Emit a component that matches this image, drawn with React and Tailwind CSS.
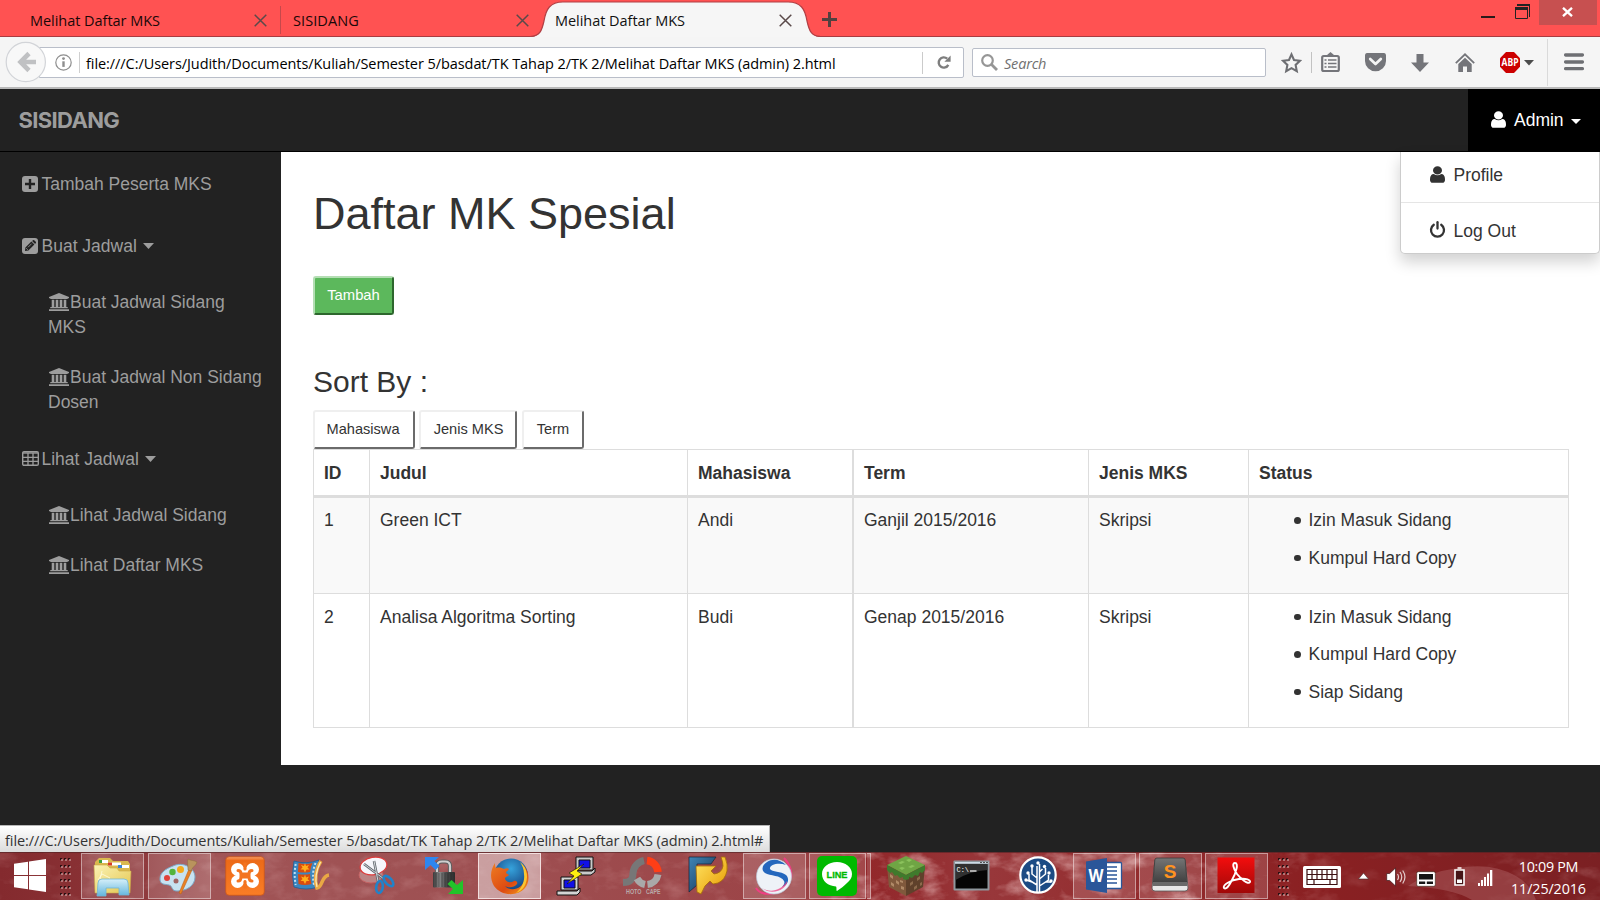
import React from "react";

const UI = "font-['Open_Sans','Noto_Sans',sans-serif]";

/* ---------- browser chrome ---------- */

function CloseX() {
  return (
    <svg className="h-[13px] w-[13px] shrink-0" viewBox="0 0 13 13">
      <path d="M.7.7l11.6 11.6M12.3.7L.7 12.3" stroke="#5a4a4a" strokeWidth="1.5" fill="none" />
    </svg>
  );
}

function TitleBar() {
  return (
    <div className={`relative flex h-[37px] items-start bg-[#ff5252] text-[14.500px] text-[#1a0808] ${UI}`}>
      <div className="absolute inset-x-0 bottom-0 h-px bg-[#a93c41]" />
      <div className="flex h-[37px] w-[280px] items-center pl-[30px] pt-[3px]">
        <span className="w-[224px] whitespace-nowrap tracking-[-0.04px]">Melihat Daftar MKS</span>
        <CloseX />
      </div>
      <div className="mt-[6px] h-[28px] w-px bg-[#c5484b]" />
      <div className="flex h-[37px] w-[249px] items-center pl-[12px] pt-[3px]">
        <span className="w-[223px] whitespace-nowrap tracking-[0.08px]">SISIDANG</span>
        <CloseX />
      </div>
      <div className="relative h-[37px] w-[290px]">
        <svg className="absolute inset-0 h-[37px] w-[290px]" viewBox="0 0 290 37">
          <path d="M0 37 C10 37 12 30 14 21 C16 9 20 2 33 2 H258 C271 2 275 9 277 21 C279 30 281 37 291 37 Z" fill="#f6f6f6" />
          <path d="M0 36.5 C10 36.5 12 30 14 21 C16 9 20 2 33 2 H258 C271 2 275 9 277 21 C279 30 281 36.5 291 36.5" fill="none" stroke="#b23f44" strokeWidth="1.2" />
        </svg>
        <div className="relative flex h-full items-center pl-[25px] pt-[3px] text-[#111]">
          <span className="w-[224px] whitespace-nowrap tracking-[-0.04px]">Melihat Daftar MKS</span>
          <CloseX />
        </div>
      </div>
      <svg className="ml-[2px] mt-[12px] h-[15px] w-[15px]" viewBox="0 0 15 15">
        <path d="M7.5 0v15M0 7.5h15" stroke="#54403f" strokeWidth="3" />
      </svg>
      <div className="flex-1" />
      <svg className="mr-[20px] mt-[16px] h-[2px] w-[14px]" viewBox="0 0 14 2">
        <path d="M0 1h14" stroke="#2a1a1a" strokeWidth="2" />
      </svg>
      <svg className="mr-[9px] mt-[4px] h-[15px] w-[15px]" viewBox="0 0 15 15">
        <path d="M2 .5H14.5V13" stroke="#222" fill="none" />
        <path d="M2 1h13" stroke="#222" strokeWidth="2" />
        <path d="M.5 3.5h12v11H.5z" stroke="#222" fill="none" />
        <path d="M0 4.500h13" stroke="#222" strokeWidth="3" />
      </svg>
      <div className="mr-[3px] flex h-[25px] w-[58px] items-center justify-center bg-[#c75050]">
        <svg className="mr-[2px] mt-[-2px] h-[10px] w-[11px]" viewBox="0 0 11 10">
          <path d="M1 .8l9 8.400M10 .8L1 9.200" stroke="#fff" strokeWidth="2.300" />
        </svg>
      </div>
    </div>
  );
}

function Toolbar() {
  return (
    <div className={`relative flex h-[52px] items-start border-b-2 border-[#b9b9b9] bg-[#f5f5f5] text-[14.500px] text-black ${UI}`}>
      <div className="ml-[39px] mt-[10px] flex h-[31px] w-[925px] items-center rounded-r-[2px] border border-[#b9bec9] bg-white">
        <svg className="ml-[15px] h-[17px] w-[17px]" viewBox="0 0 17 17">
          <circle cx="8.5" cy="8.5" r="7.7" fill="none" stroke="#8e8e8e" strokeWidth="1.2" />
          <path d="M8.5 7.3v5.6" stroke="#8e8e8e" strokeWidth="2.4" />
          <circle cx="8.5" cy="4.6" r="1.4" fill="#8e8e8e" />
        </svg>
        <div className="ml-[7px] h-[21px] w-px bg-[#cfcfcf]" />
        <span className="ml-[6px] mt-[2px] flex-1 whitespace-nowrap tracking-[-0.065px]">
          file:///C:/Users/Judith/Documents/Kuliah/Semester 5/basdat/TK Tahap 2/TK 2/Melihat Daftar MKS (admin) 2.html
        </span>
        <div className="h-[22px] w-px bg-[#cbcbcb]" />
        <svg className="ml-[14px] mr-[12px] h-[15px] w-[14px]" viewBox="0 0 14 15">
          <path d="M11.3 9.9A5.1 5.1 0 1 1 10.2 3.7" fill="none" stroke="#7e7e7e" strokeWidth="2.4" />
          <path d="M13.6.4v6.4H7.4z" fill="#7e7e7e" />
        </svg>
      </div>
      <svg className="absolute left-[5px] top-[4px] h-[42px] w-[42px]" viewBox="0 0 42 42">
        <circle cx="20.8" cy="21" r="19.6" fill="#f8f8f8" stroke="#d2d4d8" strokeWidth="1.2" />
        <path d="M24 12.5L15.5 21l8.500 8.500M15 21H31" fill="none" stroke="#c0c1c3" strokeWidth="4.600" />
      </svg>
      <div className="ml-[8px] mt-[11px] flex h-[29px] w-[294px] items-center rounded-[2px] border border-[#b9bec9] bg-white">
        <svg className="ml-[8px] h-[17px] w-[17px]" viewBox="0 0 17 17">
          <circle cx="6.500" cy="6.500" r="5.300" fill="none" stroke="#969696" strokeWidth="2.200" />
          <path d="M10.300 10.300l5.700 5.700" stroke="#969696" strokeWidth="2.800" />
        </svg>
        <span className="ml-[6px] mt-[2px] italic tracking-[-0.2px] text-[#707070]">Search</span>
      </div>
      <svg className="ml-[15px] mt-[15px] h-[22px] w-[21px]" viewBox="0 0 21 22">
        <path d="M10.500 2.400l2.500 5.600 6 .7-4.400 4.200 1.200 6.200-5.300-3-5.300 3 1.200-6.200L2 8.700l6-.7z" fill="none" stroke="#6e6f73" strokeWidth="2.100" />
      </svg>
      <div className="ml-[9px] mt-[15px] h-[21px] w-px bg-[#c2c2c2]" />
      <svg className="ml-[9px] mt-[14px] h-[22px] w-[19px]" viewBox="0 0 19 22">
        <path d="M5.500 4.500L9.500 1l4 3.500z" fill="#74757a" />
        <rect x="1.200" y="5" width="16.600" height="15" rx="1.500" fill="none" stroke="#74757a" strokeWidth="2.200" />
        <path d="M3.500 9h2M7 9h8.500M3.500 12.500h2M7 12.500h8.500M3.500 16h2M7 16h8.500" stroke="#74757a" strokeWidth="1.700" />
      </svg>
      <svg className="ml-[25px] mt-[16px] h-[19px] w-[21px]" viewBox="0 0 21 19">
        <path d="M2.500 0h16A2.300 2.300 0 0 1 21 2.300V8a10.500 10.300 0 0 1-21 0V2.300A2.300 2.300 0 0 1 2.500 0z" fill="#74757a" />
        <path d="M5.200 6l5.300 5 5.300-5" fill="none" stroke="#f5f5f5" strokeWidth="2.700" strokeLinecap="round" strokeLinejoin="round" />
      </svg>
      <svg className="ml-[25px] mt-[17px] h-[18px] w-[18px]" viewBox="0 0 18 18">
        <path d="M5.500 0h7v8.500H18L9 18 0 8.500h5.500z" fill="#74757a" />
      </svg>
      <svg className="ml-[26px] mt-[16px] h-[19px] w-[20px]" viewBox="0 0 20 19">
        <path d="M.8 10.200L10 1.300l9.200 8.900" fill="none" stroke="#74757a" strokeWidth="1.800" />
        <path d="M3.300 11L10 4.700 16.700 11v8H12v-5.500H8V19H3.300z" fill="#74757a" />
      </svg>
      <svg className="ml-[25px] mt-[15px] h-[21px] w-[20px] overflow-visible" viewBox="0 0 20 21">
        <path d="M6 0h8l6 6.200v8.600L14 21H6L0 14.800V6.200z" fill="#c00" />
        <text x="10" y="14" textAnchor="middle" textLength="17" lengthAdjust="spacingAndGlyphs" fontSize="10" fontWeight="700" fontFamily="Open Sans, sans-serif" fill="#fff">ABP</text>
      </svg>
      <svg className="ml-[4px] mt-[23px] h-[6px] w-[10px]" viewBox="0 0 10 6"><path d="M0 0h10L5 5.500z" fill="#4c4c4c" /></svg>
      <div className="ml-[13px] mt-[2px] h-[47px] w-px bg-[#dadada]" />
      <svg className="ml-[16px] mt-[16px] h-[18px] w-[20px]" viewBox="0 0 20 18">
        <path d="M1.600 2h16.800M1.600 9h16.800M1.600 15.700h16.800" stroke="#6e6f73" strokeWidth="3.300" strokeLinecap="round" />
      </svg>
    </div>
  );
}

/* ---------- page icons ---------- */

function UserIcon({ className }) {
  return (
    <svg className={className} viewBox="0 100 1280 1580" preserveAspectRatio="none" fill="currentColor">
      <path d="M1280 1399q0 109-62.500 187t-150.500 78h-854q-88 0-150.500-78t-62.500-187q0-85 8.500-160.500t31.500-152 58.500-131 94-89 134.500-34.500q131 128 313 128t313-128q76 0 134.500 34.500t94 89 58.500 131 31.500 152 8.500 160.500zm-256-887q0 159-112.500 271.500t-271.500 112.500-271.500-112.500-112.500-271.500 112.500-271.500 271.500-112.500 271.500 112.500 112.500 271.500z" />
    </svg>
  );
}

function PowerIcon({ className }) {
  return (
    <svg className={className} viewBox="0 0 16 17">
      <path d="M4.300 3.800a6.500 6.500 0 1 0 7.400 0" fill="none" stroke="currentColor" strokeWidth="2.300" strokeLinecap="round" />
      <path d="M8 1.200v6.300" stroke="currentColor" strokeWidth="2.300" strokeLinecap="round" />
    </svg>
  );
}

function PlusSquare() {
  return (
    <svg className="mr-[3.500px] h-[16px] w-[16px]" viewBox="0 0 16 16">
      <rect width="16" height="16" rx="3" fill="currentColor" />
      <path d="M8 3v10M3 8h10" stroke="#222" strokeWidth="2.400" />
    </svg>
  );
}

function PencilSquare() {
  return (
    <svg className="mr-[3.500px] h-[16px] w-[16px]" viewBox="0 0 16 16">
      <rect width="16" height="16" rx="3" fill="currentColor" />
      <path d="M3 13l.4-3.400 6-6 3 3-6 6zM10.100 2.900l.8-.7a1 1 0 0 1 1.300 0l1.600 1.600a1 1 0 0 1 0 1.300l-.7.8z" fill="#222" />
      <path d="M4.200 10.200l1.600 1.600M6 9.300l3.600-3.600" stroke="#9d9d9d" strokeWidth=".8" />
    </svg>
  );
}

function TableIcon() {
  return (
    <svg className="mb-[2px] mr-[2.500px] h-[15px] w-[17px]" viewBox="0 0 17 15">
      <rect x=".7" y=".7" width="15.600" height="13.600" rx="1.300" fill="none" stroke="currentColor" strokeWidth="1.400" />
      <path d="M1 2h15" stroke="currentColor" strokeWidth="1.400" />
      <path d="M1 6.400h15M1 10.300h15M6 2v12M11 2v12" stroke="currentColor" strokeWidth="1.300" />
    </svg>
  );
}

function BankIcon() {
  return (
    <svg className="mb-[-1px] ml-[0.500px] mr-[1.500px] inline-block h-[18px] w-[20px] align-[-2px]" viewBox="0 0 20 18" fill="currentColor">
      <path d="M10 0l10 4v1.300h-1.300v.7H1.300v-.7H0V4z" />
      <path d="M2.700 6.700h2.600v7.300h1.400V6.700h2.600v7.300h1.400V6.700h2.600v7.300h1.400V6.700h2.600v7.300h1.400v1.300H1.300V14h1.400zM0 16.300h20V18H0z" />
    </svg>
  );
}

function Caret({ className }) {
  return (
    <svg className={className} viewBox="0 0 10 5" preserveAspectRatio="none">
      <path d="M0 0h10L5 5z" fill="currentColor" />
    </svg>
  );
}

/* ---------- page ---------- */

function NavBar() {
  return (
    <header className="relative flex h-[63px] justify-between border-b border-black bg-[#222]">
      <span className="ml-[18.500px] mt-[15px] font-['Inter',sans-serif] text-[22px] font-bold leading-[32px] tracking-[-0.650px] text-[#9d9d9d]">SISIDANG</span>
      <div className="flex h-[63px] w-[132px] bg-black text-white">
        <UserIcon className="ml-[23px] mt-[22px] h-[17px] w-[15px]" />
        <span className="ml-[8px] mt-[19px] w-[57px]">Admin</span>
        <Caret className="mt-[30px] h-[5px] w-[10px]" />
      </div>
      <div className="absolute right-0 top-[63px] z-10 h-[102px] w-[200px] rounded-b-[5px] border border-t-0 border-[#ccc] bg-white text-[#333] shadow-[0_8px_15px_rgba(0,0,0,0.18)]">
        <div className="flex h-[51px] border-b border-[#e5e5e5] pl-[29px] pt-[11px]">
          <UserIcon className="mt-[3px] h-[17px] w-[15px]" />
          <span className="ml-[8.500px]">Profile</span>
        </div>
        <div className="flex pl-[28px] pt-[16px]">
          <PowerIcon className="mt-[2px] h-[17px] w-[17px]" />
          <span className="ml-[7.500px]">Log Out</span>
        </div>
      </div>
    </header>
  );
}

function SideBar() {
  return (
    <aside className="w-[281px] shrink-0 pt-[19.500px] text-[#9d9d9d]">
      <div className="flex items-center pl-[22px]"><PlusSquare />Tambah Peserta MKS</div>
      <div className="mt-[37px] flex items-center pl-[22px]">
        <PencilSquare />Buat Jadwal<Caret className="ml-[6px] h-[6px] w-[11px]" />
      </div>
      <div className="ml-[48px] mt-[31px] w-[220px]"><BankIcon />Buat Jadwal Sidang<br />MKS</div>
      <div className="ml-[48px] mt-[25px] w-[225px] whitespace-nowrap"><BankIcon />Buat Jadwal Non Sidang<br />Dosen</div>
      <div className="mt-[32px] flex items-center pl-[22px]">
        <TableIcon />Lihat Jadwal<Caret className="ml-[6px] h-[6px] w-[11px]" />
      </div>
      <div className="ml-[48px] mt-[31px]"><BankIcon />Lihat Jadwal Sidang</div>
      <div className="ml-[48px] mt-[25px]"><BankIcon />Lihat Daftar MKS</div>
    </aside>
  );
}

function SortButton({ children, width }) {
  return (
    <button className={`h-[39px] rounded-[3px] border-2 border-b-[#6b6b6b] border-l-[#efefef] border-r-[#6b6b6b] border-t-[#efefef] bg-white text-[14.600px] text-[#333] ${width}`}>
      {children}
    </button>
  );
}

const rows = [
  { id: 1, judul: "Green ICT", mhs: "Andi", term: "Ganjil 2015/2016", jenis: "Skripsi", status: ["Izin Masuk Sidang", "Kumpul Hard Copy"], cls: "h-[96px] bg-[#f9f9f9]", pad: "pt-[10px]" },
  { id: 2, judul: "Analisa Algoritma Sorting", mhs: "Budi", term: "Genap 2015/2016", jenis: "Skripsi", status: ["Izin Masuk Sidang", "Kumpul Hard Copy", "Siap Sidang"], cls: "h-[134px]", pad: "pt-[10.700px]" },
];

const td = "border-b border-r border-[#ddd] px-[10px] align-top";
const th = "border-b-[3px] border-r border-t border-[#ddd] px-[10px] pt-[2px] text-left align-middle font-bold";

function Content() {
  return (
    <main className="h-[613px] flex-1 bg-white pl-[32px] pt-[37px] text-[#333]">
      <h1 className="h-[49px] text-[45px] leading-[49px]">Daftar MK Spesial</h1>
      <button className="mt-[38px] block h-[39px] w-[81px] rounded-[3px] border-2 border-b-[#2d672d] border-l-[#b4deb4] border-r-[#2d672d] border-t-[#b4deb4] bg-[#5cb85c] pb-[1px] text-[14.800px] text-white">Tambah</button>
      <h3 className="mt-[50px] h-[33px] text-[30px] leading-[33px]">Sort By :</h3>
      <div className="mt-[12px] flex">
        <SortButton width="w-[102px] pr-[2px]">Mahasiswa</SortButton>
        <SortButton width="w-[98px] ml-[4px] pl-[1px]">Jenis MKS</SortButton>
        <SortButton width="w-[62px] ml-[5px]">Term</SortButton>
      </div>
      <table className="w-[1256px] table-fixed border-separate border-spacing-0">
        <colgroup>
          <col className="w-[57px]" /><col className="w-[318px]" /><col className="w-[166px]" />
          <col className="w-[235px]" /><col className="w-[160px]" /><col className="w-[320px]" />
        </colgroup>
        <thead>
          <tr className="h-[49px]">
            <th className={`${th} border-l`}>ID</th>
            <th className={th}>Judul</th>
            <th className={`${th} border-r-2`}>Mahasiswa</th>
            <th className={th}>Term</th>
            <th className={th}>Jenis MKS</th>
            <th className={th}>Status</th>
          </tr>
        </thead>
        <tbody>
          {rows.map((r) => (
            <tr key={r.id} className={r.cls}>
              <td className={`${td} ${r.pad} border-l`}>{r.id}</td>
              <td className={`${td} ${r.pad}`}>{r.judul}</td>
              <td className={`${td} ${r.pad} border-r-2`}>{r.mhs}</td>
              <td className={`${td} ${r.pad}`}>{r.term}</td>
              <td className={`${td} ${r.pad}`}>{r.jenis}</td>
              <td className={`${td} ${r.pad}`}>
                <ul className="flex flex-col gap-[12.500px] pl-[35px]">
                  {r.status.map((s) => (
                    <li key={s} className="flex items-center gap-[8px]">
                      <i className="h-[6.500px] w-[6.500px] rounded-full bg-[#333]" />
                      {s}
                    </li>
                  ))}
                </ul>
              </td>
            </tr>
          ))}
        </tbody>
      </table>
    </main>
  );
}

/* ---------- taskbar icons ---------- */

const icon = "h-[40px] w-[40px] shrink-0 overflow-visible";

const FolderIcon = () => (
  <svg className={icon} viewBox="0 0 40 40">
    <defs>
      <linearGradient id="fo" x1="0" y1="0" x2="1" y2="1"><stop offset="0" stopColor="#fbf3b4" /><stop offset="1" stopColor="#e3c54f" /></linearGradient>
      <linearGradient id="fb" x1="0" y1="0" x2="0" y2="1"><stop offset="0" stopColor="#d6f0fa" /><stop offset="1" stopColor="#62b5dc" /></linearGradient>
    </defs>
    <path d="M4 3l2-2h11l3 3h15l2 3v28H2V5z" fill="#d9b84e" />
    <path d="M6 3h9v3H6zM15 5.500h13v3H15zM25 8h11v3H25z" fill="#fff" />
    <path d="M6 3h3v3H6z" fill="#3ca03c" /><path d="M15 5.500h4v3h-4z" fill="#d83a25" /><path d="M25 8h4v3h-4z" fill="#3a86d8" />
    <path d="M1 8h13l3 3h7l2 3h12l-1 22H2z" fill="url(#fo)" stroke="#caa947" strokeWidth=".6" />
    <path d="M5 26q0-4 4-4h22q4 0 4 4l1 12H26v-7H13v8H4z" fill="url(#fb)" stroke="#70b6d6" strokeWidth=".8" />
    <path d="M9 14l-2 8M9 17l8 4M9 17l-4 6" stroke="#fffbe0" strokeWidth=".8" />
  </svg>
);

const PaintIcon = () => (
  <svg className={icon} viewBox="0 0 40 40">
    <path d="M14 9C24 4 36 11 36 20s-9 14-18 14c-6 0-4-5-8-6S1 28 1 22 6 12 14 9z" fill="#c7e2f1" stroke="#7ca9c6" strokeWidth="1" />
    <circle cx="8" cy="21" r="3" fill="#e0413a" /><circle cx="13.500" cy="15" r="3.200" fill="#52b43c" /><circle cx="21.500" cy="12.500" r="3.500" fill="#f6a91c" />
    <circle cx="17" cy="24" r="2.500" fill="#a16463" />
    <path d="M30 12l3 1-11 24-2-1z" fill="#e88125" stroke="#b75c15" strokeWidth=".5" />
    <path d="M29 13c0-5-1-8 0-11 3 2 6 1 9 3-1 4-4 4-6 9z" fill="#b9935d" stroke="#8d6b3c" strokeWidth=".5" />
  </svg>
);

const XamppIcon = () => (
  <svg className={icon} viewBox="0 0 40 40">
    <defs><linearGradient id="xa" x1="0" y1="0" x2="0" y2="1"><stop offset="0" stopColor="#f8a06a" /><stop offset=".1" stopColor="#ec6a18" /><stop offset="1" stopColor="#fb7d25" /></linearGradient></defs>
    <rect x=".7" y=".7" width="38.600" height="38.600" rx="3.500" fill="url(#xa)" stroke="#c9561a" strokeWidth=".8" />
    <g fill="#fff">
      <circle cx="12.500" cy="13.500" r="6.500" /><circle cx="27.500" cy="13.500" r="6.500" />
      <circle cx="12.500" cy="25.500" r="6.500" /><circle cx="27.500" cy="25.500" r="6.500" />
      <path d="M11 11h18v17H11z" />
    </g>
    <path d="M19 7h2v6a1 1 0 0 1-2 0zM19 25.500a1 1 0 0 1 2 0V32h-2z" fill="#f37421" stroke="#f37421" strokeWidth="1.200" />
    <path d="M5 19.500l4-.8v1.600zM35 19.500l-4-.8v1.600z" fill="#f37421" />
    <path d="M13 14.500q3 0 3 3.500h8q0-3.500 3-3.500M13 25q3 0 3-4h8q0 4 3 4" fill="none" stroke="#f37421" strokeWidth="3" strokeLinecap="round" />
  </svg>
);

const MovieIcon = () => (
  <svg className={icon} viewBox="0 0 40 40">
    <path d="M3 5q12 4 25-1-5 13-1 27-12 4-24 0-3-12 0-26z" fill="#3b86c0" stroke="#1f6098" strokeWidth=".8" />
    <path d="M7.500 7q7 2 14 0-2 4-2.500 9-6 1-12 0zM7 18q6 1 12 0 0 5 1.500 10-7 2-13 0z" fill="#d94c10" />
    <path d="M14 7l1 3 3-1-1.500 2.500 2 2-3 0-1.500 3-1.500-3-3 0 2-2L10 9l3 1zM14 18.500l1 3 3-1-1.500 2.500 2 2-3 0-1.500 3-1.500-3-3 0 2-2-1.500-2.500 3 1z" fill="#ffae1c" />
    <path d="M4.700 8q-2 10 0 21" fill="none" stroke="#bfe0f3" strokeWidth="2" strokeDasharray="2 2" /><path d="M24.500 7q-4 10-1.500 22" fill="none" stroke="#bfe0f3" strokeWidth="2" strokeDasharray="2 2" />
    <path d="M30 5c-5 7-7 18-4 27 6-1 4-12 12-13" fill="none" stroke="#e9a844" strokeWidth="3.600" /><path d="M29.500 6c-4 8-6 17-3.500 25" fill="none" stroke="#fde7b2" strokeWidth="1.300" />
  </svg>
);

const SnipIcon = () => (
  <svg className={icon} viewBox="0 0 40 40">
    <ellipse cx="14" cy="19" rx="12" ry="8" fill="#c99a9a" stroke="#d46a6a" opacity=".7" />
    <ellipse cx="16.500" cy="10" rx="13.500" ry="8.700" transform="rotate(-10 16.500 10)" fill="#f6f6fb" stroke="#dd3b3b" strokeWidth="1.200" />
    <path d="M7 8l20 15M17 5l4 20" stroke="#62676e" strokeWidth="2.600" /><path d="M7 8l20 15M17 5l4 20" stroke="#d0d4d8" strokeWidth="1" />
    <ellipse cx="22.500" cy="31" rx="3.300" ry="6" transform="rotate(8 22.500 31)" fill="none" stroke="#2182c9" strokeWidth="2.600" /><ellipse cx="31.500" cy="25" rx="3.200" ry="6.300" transform="rotate(-42 31.500 25)" fill="none" stroke="#2182c9" strokeWidth="2.600" />
  </svg>
);

const LockIcon = () => (
  <svg className={icon} viewBox="0 0 40 40">
    <defs><linearGradient id="lk" x1="0" x2="1"><stop offset="0" stopColor="#3a3a3a" /><stop offset=".3" stopColor="#8a8a8a" /><stop offset=".6" stopColor="#4a4a4a" /><stop offset="1" stopColor="#2c2c2c" /></linearGradient></defs>
    <path d="M13 17v-7q0-4.500 5-4.500h3q5 0 5 4.500v7" fill="none" stroke="#5c5c5c" strokeWidth="4.200" /><path d="M13 17v-7q0-4.500 5-4.500h3q5 0 5 4.500v7" fill="none" stroke="#cfcfcf" strokeWidth="2.200" />
    <rect x="9" y="16" width="22" height="15.500" rx="1" fill="url(#lk)" />
    <path d="M12 17v14M15 17v14M18 17v14M21 17v14M24 17v14M27 17v14" stroke="#222" strokeWidth=".8" opacity=".6" />
    <path d="M1 1h14l-4.500 4 5 5-4 4-5-5L1 14z" fill="#2e86f0" />
    <path d="M39 38H24l5-5-5.500-5 4-4 5.500 5 6-5z" fill="#22c32a" />
  </svg>
);

const FirefoxIcon = () => (
  <svg className={icon} viewBox="0 0 40 40">
    <defs>
      <radialGradient id="fg" cx=".5" cy=".3" r=".7"><stop offset="0" stopColor="#36a3dc" /><stop offset="1" stopColor="#123a78" /></radialGradient>
      <linearGradient id="ff" x1="0" y1="0" x2="1" y2="1"><stop offset="0" stopColor="#ee7d22" /><stop offset=".6" stopColor="#dd4a12" /><stop offset="1" stopColor="#f7a21b" /></linearGradient>
    </defs>
    <circle cx="21" cy="18.500" r="17" fill="url(#fg)" />
    <path d="M5 6c0 2 0 4 1 5 3-1 6 0 8 1 2-1 4-1 5 0-1 2-3 2-3 4l3 2c-1 2-4 1-4 4 2 4 6 4 9 2 2-1 4 1 3 3-3 4-9 4-12 2 5 6 18 4 20-8 1-5 0-9-2-13 8 8 6 18 2 23-8 9-24 8-31-2C-1 20 1 12 5 6z" fill="url(#ff)" />
    <path d="M30 5c8 6 9 17 4 25-2 3-5 5-8 6 6-5 9-12 8-19 0-5-2-9-4-12z" fill="#f9c631" />
  </svg>
);

const PuttyIcon = () => (
  <svg className={icon} viewBox="0 0 40 40" stroke="#111" strokeWidth="1">
    <path d="M20 1h17v13H20zM17 15h19l3-3v4l-4 3H17z" fill="#c9c9c9" /><path d="M23 4h11v8H23z" fill="#1010e8" />
    <path d="M5 21h17v13H5zM1 35h20l3-3v4l-3 3H1z" fill="#d4d4d4" /><path d="M8 24h11v8H8z" fill="#1010e8" />
    <path d="M28 8L13 17l5 3-7 8 15-10-5-3z" fill="#ffee10" strokeWidth=".6" />
  </svg>
);

const PhotoScapeIcon = () => (
  <svg className={icon} viewBox="0 0 40 40">
    <path d="M22 4.500a14 14 0 0 0-11 12.500c0 7-3 9.500-10 9.500" fill="none" stroke="#777" strokeWidth="7" />
    <path d="M25 4.500a12.500 12.500 0 0 1 11 11.500" fill="none" stroke="#ff3e16" strokeWidth="7.500" />
    <path d="M36 18.500a12 12 0 0 1-10.500 10M23 28.500a12 12 0 0 1-8-6" fill="none" stroke="#a9a9a9" strokeWidth="7" />
    <text x="4" y="38" textLength="15.500" lengthAdjust="spacingAndGlyphs" fontSize="7.500" fontWeight="700" fontFamily="Liberation Sans, sans-serif" fill="#b9a9a9">HOTO</text>
    <text x="24" y="38" textLength="14.500" lengthAdjust="spacingAndGlyphs" fontSize="7.500" fontWeight="700" fontFamily="Liberation Sans, sans-serif" fill="#b9a9a9">CAPE</text>
  </svg>
);

const ArrowsIcon = () => (
  <svg className={icon} viewBox="0 0 40 40">
    <defs>
      <linearGradient id="ay" x1="0" y1="0" x2="1" y2="1"><stop offset="0" stopColor="#ffe564" /><stop offset="1" stopColor="#e79a00" /></linearGradient>
      <linearGradient id="ab" x1="0" y1="0" x2="1" y2="1"><stop offset="0" stopColor="#3f86b8" /><stop offset="1" stopColor="#17304d" /></linearGradient>
    </defs>
    <path d="M1 1h27l-5 7H9v21l-8 7z" fill="url(#ab)" stroke="#122438" strokeWidth=".7" />
    <path d="M8 10h20l-5 5 3 3q8-1 9-8 0-4-2-9h4q3 7 2 14-2 9-9 12l-5 1-3-3-5 5-4 8-4-2z" fill="url(#ay)" stroke="#a46c07" strokeWidth=".8" strokeLinejoin="round" />
  </svg>
);

const SwirlIcon = () => (
  <svg className={icon} viewBox="0 0 40 40">
    <path d="M30 1c7 7 8 16 7 20M2 31c5 8 22 9 33-5" fill="none" stroke="#ef3f83" strokeWidth="2" />
    <circle cx="20" cy="19.500" r="17.500" fill="#eef2f7" stroke="#bccbdc" strokeWidth=".7" />
    <path d="M32 8c-5-5-13-7-19-3-5 3-6 8-2 11 5 3 16 2 19 8 1 2 0 4-2 6 6-2 8-8 4-12-5-4-14-3-16-6-1-4 8-7 16-4z" fill="#2467bd" />
    <path d="M8 31c8 5 19 3 25-7 1 7-14 16-25 7z" fill="#ee4281" opacity=".75" />
  </svg>
);

const LineIcon = () => (
  <svg className={icon} viewBox="0 0 40 40">
    <rect width="40" height="40" rx="5" fill="#00b900" />
    <path d="M20 6c8.500 0 15 5.300 15 12 0 4-2 6-5 9-3 3-7 6-10 8-1 0 0-3-1-4.500C11 30 5 25 5 18 5 11.300 11.500 6 20 6z" fill="#fff" />
    <text x="20" y="22" textAnchor="middle" textLength="21" lengthAdjust="spacingAndGlyphs" fontSize="9.500" fontWeight="700" fontFamily="Liberation Sans, sans-serif" fill="#00b900" stroke="#00b900" strokeWidth=".3">LINE</text>
  </svg>
);

const BlockIcon = () => (
  <svg className={icon} viewBox="0 0 40 40">
    <path d="M1 10l19 9v21L3 31z" fill="#80593c" /><path d="M39 10l-19 9v21l17-9z" fill="#5f412b" />
    <path d="M20 0l19 9-19 10L1 9z" fill="#6fa544" />
    <path d="M1 9l19 10v5l-3-1v-2l-3 1-3-3-2 1-3-4-2 1-3-3zM39 9L20 19v5l3-1v-2l3 1 3-3 3 1 2-4 2 1 3-3z" fill="#3f7a2c" />
    <path d="M4 18l3 2v3l-3-2zM10 24l3 2v3l-3-2zM15 30l3 1v3l-3-1zM5 26l3 2v3l-3-2zM14 24l3 1v2l-3-1z" fill="#b08a67" />
    <path d="M24 27l3-2v3l-3 2zM31 22l3-2v3l-3 2zM28 31l3-2v3l-3 2zM34 27l2-1v3l-2 1z" fill="#8c6a4c" />
    <path d="M12 7l4-2 3 1-4 2zM22 11l4-2 3 1-4 2zM20 4l3-1 3 1-3 2zM13 12l3-1 3 1-3 2z" fill="#8bc25c" />
  </svg>
);

const CmdIcon = () => (
  <svg className={icon} viewBox="0 0 40 40">
    <rect x="1.500" y="4.500" width="36" height="30" rx="1" fill="#8f979d" />
    <path d="M3 6h33.500v1.500H3z" fill="#ccdbe6" /><path d="M28 6h2v1h-2zM31 6h2v1h-2zM34 6h2v1h-2z" fill="#555" />
    <path d="M3.500 8h32V32.500h-32z" fill="#050505" />
    <path d="M3.500 8h32v6Q18 15 3.500 24z" fill="#3b3b3b" opacity=".8" />
    <text x="4.500" y="15.500" fontSize="8" textLength="12.500" lengthAdjust="spacingAndGlyphs" fontFamily="Liberation Mono, monospace" fill="#fff">C:\</text>
    <path d="M18 15h6.500" stroke="#fff" strokeWidth="1.200" />
  </svg>
);

const TreeIcon = () => (
  <svg className={icon} viewBox="0 0 40 40">
    <circle cx="20" cy="19" r="17.700" fill="#1c4b84" stroke="#fff" strokeWidth="2.200" />
    <g stroke="#fff" strokeWidth="1.500" fill="none">
      <path d="M19 36V10M21.500 36V8M19 29l-8-5v-6M19 22l-5-4V11M21.500 30l9-6v-5M21.500 23l6-5v-6M14 26l-6-2M28 26l5 0M21.500 16l3-3" />
    </g>
    <g fill="#fff"><circle cx="20" cy="7" r="1.700" /><circle cx="14" cy="10" r="1.700" /><circle cx="26.500" cy="10.500" r="1.700" /><circle cx="10" cy="17" r="1.700" /><circle cx="31" cy="17" r="1.700" /><circle cx="8" cy="24" r="1.700" /><circle cx="33" cy="25" r="1.700" /></g>
  </svg>
);

const WordIcon = () => (
  <svg className={icon} viewBox="0 0 40 40">
    <rect x="20" y="5.500" width="17.500" height="26" rx="1" fill="#fff" stroke="#2a5699" strokeWidth="1.300" />
    <path d="M23 10h10M23 14h10M23 18h10M23 22h10M23 26h10" stroke="#2a5699" strokeWidth="1.700" />
    <path d="M2 4.500L23 1v35L2 32.500z" fill="#2a5699" />
    <text x="12" y="25" textAnchor="middle" textLength="15" lengthAdjust="spacingAndGlyphs" fontSize="18" fontWeight="700" fontFamily="Open Sans, sans-serif" fill="#fff">W</text>
  </svg>
);

const SublimeIcon = () => (
  <svg className={icon} viewBox="0 0 40 40">
    <defs><linearGradient id="su" x1="0" y1="0" x2="0" y2="1"><stop offset="0" stopColor="#757575" /><stop offset="1" stopColor="#3d3d3d" /></linearGradient></defs>
    <path d="M5 3h30l3 28q0 3-3 3H5q-3 0-3-3z" fill="#e8e8e8" stroke="#555" strokeWidth=".8" />
    <path d="M7 1h26q2 0 2.200 2l1.800 22q0 2-2 2H5q-2 0-2-2L4.800 3Q5 1 7 1z" fill="url(#su)" stroke="#333" strokeWidth=".7" />
    <path d="M3 25h34l.3 4H2.700z" fill="#6a6a6a" />
    <text x="20" y="20.500" textAnchor="middle" fontSize="19" fontWeight="700" fontFamily="Liberation Sans, sans-serif" fill="#ff9320">S</text>
  </svg>
);

const AdobeIcon = () => (
  <svg className={icon} viewBox="0 0 40 40">
    <defs><linearGradient id="ad" x1="0" y1="0" x2="0" y2="1"><stop offset="0" stopColor="#f30d0d" /><stop offset="1" stopColor="#a00808" /></linearGradient></defs>
    <rect x="1.500" y=".5" width="37" height="35.500" fill="url(#ad)" />
    <path d="M8 31c-2-3 7-8 15-9 7-1 12 1 11 3-2 3-9-3-13-8-4-6-5-11-2-11 4 0 1 10-3 17-3 6-6 10-8 8z" fill="none" stroke="#fff" strokeWidth="1.900" />
  </svg>
);

function Slot({ children, state }) {
  const look =
    state === "active"
      ? "border border-[#f2dede] bg-white/45"
      : state === "open"
      ? "border border-white/45 bg-white/15"
      : "";
  return (
    <div className="flex w-[66.150px] shrink-0 justify-center">
      <div className={`mt-px flex h-[46px] w-[63px] items-start justify-center pt-[3px] ${look}`}>{children}</div>
    </div>
  );
}

function Grip() {
  return (
    <svg className="mt-[6px] h-[40px] w-[12px] shrink-0" viewBox="0 0 12 40">
      {[0, 1, 2, 3, 4, 5].map((r) =>
        [0, 1, 2].map((c) => (
          <g key={`${r}-${c}`}>
            <rect x={c * 4} y={r * 7} width="2" height="2" fill="#2c1012" />
            <rect x={c * 4 + 1} y={r * 7 + 1} width="2" height="2" fill="#c79a9a" opacity=".7" />
          </g>
        ))
      )}
    </svg>
  );
}

function TaskbarTexture() {
  return (
    <svg className="absolute inset-0 h-[48px] w-[1600px]" viewBox="0 0 1600 48" preserveAspectRatio="none">
      <defs>
        <linearGradient id="tb" x1="0" x2="1" y1="0" y2="0">
          <stop offset="0" stopColor="#842a2e" /><stop offset=".08" stopColor="#8b3437" /><stop offset=".13" stopColor="#a05456" />
          <stop offset=".3" stopColor="#9e5052" /><stop offset=".5" stopColor="#9c4346" /><stop offset=".54" stopColor="#92272a" />
          <stop offset=".62" stopColor="#98373a" /><stop offset=".7" stopColor="#942d2f" /><stop offset=".82" stopColor="#8a2022" /><stop offset="1" stopColor="#7b2023" />
        </linearGradient>
        <linearGradient id="gm" x1="0" x2="1" y1="0" y2="0">
          <stop offset="0" stopColor="#555" /><stop offset=".1" stopColor="#555" /><stop offset=".5" stopColor="#666" />
          <stop offset=".55" stopColor="#fff" /><stop offset=".78" stopColor="#ddd" /><stop offset=".84" stopColor="#333" /><stop offset="1" stopColor="#555" />
        </linearGradient>
        <mask id="gmask"><rect width="1600" height="48" fill="url(#gm)" /></mask>
        <filter id="grain" x="0" y="0" width="100%" height="100%">
          <feTurbulence type="fractalNoise" baseFrequency=".035 .06" numOctaves="4" seed="4" />
          <feColorMatrix values="0 0 0 0 .85  0 0 0 0 .55  0 0 0 0 .55  2.600 0 0 0 -1.250" />
        </filter>
      </defs>
      <rect width="1600" height="48" fill="url(#tb)" />
      <g mask="url(#gmask)"><rect width="1600" height="48" filter="url(#grain)" opacity=".6" /></g>
      <path d="M1408 34q20-14 50-18 34-6 58 8 14 8 20 24h-64q-20-12-64-14z" fill="#b06466" opacity=".45" />
      <path d="M0 .5h1600" stroke="#4d2224" opacity=".6" />
    </svg>
  );
}

function Taskbar() {
  return (
    <footer className="relative h-[48px] overflow-hidden">
      <TaskbarTexture />
      <div className="relative flex h-full">
        <svg className="ml-[14px] mt-[7px] h-[33px] w-[32px] shrink-0" viewBox="0 0 32 33" fill="#fff">
          <path d="M0 4.700L14 2.700V16H0zM15 2.500L32 0v16H15zM0 17h14v13.300L0 28.300zM15 17h17v16l-17-2.500z" />
        </svg>
        <div className="w-[14px] shrink-0" />
        <Grip />
        <div className="w-[7.800px] shrink-0" />
        <Slot state="open"><FolderIcon /></Slot>
        <Slot state="open"><PaintIcon /></Slot>
        <Slot><XamppIcon /></Slot>
        <Slot><MovieIcon /></Slot>
        <Slot><SnipIcon /></Slot>
        <Slot><LockIcon /></Slot>
        <Slot state="active"><FirefoxIcon /></Slot>
        <Slot><PuttyIcon /></Slot>
        <Slot><PhotoScapeIcon /></Slot>
        <Slot><ArrowsIcon /></Slot>
        <Slot state="open"><SwirlIcon /></Slot>
        <div className="flex w-[65.300px] shrink-0 pl-[2px] pt-px">
          <div className="flex h-[46px] w-[57px] justify-center border border-white/45 bg-white/15 pr-[2px] pt-[2px]"><LineIcon /></div>
          <div className="ml-[1px] h-[46px] w-[4px] border border-l-0 border-white/45 bg-white/15" />
        </div>
        <Slot><BlockIcon /></Slot>
        <Slot><CmdIcon /></Slot>
        <Slot><TreeIcon /></Slot>
        <Slot state="open"><WordIcon /></Slot>
        <Slot state="open"><SublimeIcon /></Slot>
        <Slot state="open"><AdobeIcon /></Slot>
        <div className="w-[9px] shrink-0" />
        <Grip />
        <svg className="ml-[12.500px] mt-[14px] h-[22px] w-[38px] shrink-0" viewBox="0 0 38 22">
          <rect width="38" height="22" rx="1.500" fill="#fff" />
          <g fill="none" stroke="#3c1012" strokeWidth="1.200"><path d="M4 3.500h30v15H4zM4 8.500h30M4 13.500h30M9 3.500v10M14 3.500v10M19 3.500v10M24 3.500v10M29 3.500v10M11 13.500v5M27 13.500v5" /></g>
        </svg>
        <svg className="ml-[17px] mt-[20px] h-[8px] w-[11px] shrink-0" viewBox="0 0 11 8"><path d="M5.500 1L10.500 7H.5z" fill="#fff" stroke="#48292a" strokeWidth=".6" /></svg>
        <svg className="ml-[17.500px] mt-[15px] h-[20px] w-[20px] shrink-0" viewBox="0 0 20 20">
          <path d="M.7 6.500h3L9.500 1v18l-5.800-5.500h-3z" fill="#fff" stroke="#3b1517" strokeWidth=".7" />
          <path d="M11.500 7q2 3 0 6M14 5q3.500 5 0 10M16.700 3.500q4.500 6.500 0 13" fill="none" stroke="#e4cccc" strokeWidth="1.200" />
        </svg>
        <svg className="ml-[10px] mt-[19px] h-[16px] w-[20px] shrink-0" viewBox="0 0 20 16">
          <rect x=".7" y=".7" width="18.600" height="14.600" rx="1.500" fill="#fff" stroke="#321" strokeWidth=".6" />
          <path d="M3 3h14v5.500H3zM3 10.500h6.200v2.500H3zM10.800 10.500H17v2.500h-6.200z" fill="#151515" />
        </svg>
        <svg className="ml-[18px] mt-[15px] h-[19px] w-[11px] shrink-0" viewBox="0 0 11 19">
          <path d="M3.500 1h4M1 3h9v15H1z" fill="#461517" stroke="#fff" strokeWidth="1.600" /><path d="M3 12.500h5V16H3z" fill="#fff" />
        </svg>
        <svg className="ml-[12px] mt-[17px] h-[17px] w-[16px] shrink-0" viewBox="0 0 16 17">
          <path d="M1 14h2v3H1zM4 11h2v6H4zM7 8h2v9H7zM10 4.500h2V17h-2zM13 1h2.300v16H13z" fill="#fff" />
        </svg>
        <div className={`ml-[15px] flex w-[80px] shrink-0 flex-col items-center pt-[4px] text-[14.300px] leading-[22px] text-white ${UI}`}>
          <span className="whitespace-nowrap tracking-[-0.3px]">10:09 PM</span>
          <span className="whitespace-nowrap tracking-[-0.1px]">11/25/2016</span>
        </div>
      </div>
    </footer>
  );
}

export default function App() {
  return (
    <div className="flex h-[900px] w-[1600px] flex-col overflow-hidden bg-[#222] font-['Liberation_Sans',Arial,sans-serif] text-[17.500px] leading-[25px]">
      <TitleBar />
      <Toolbar />
      <div className="relative flex h-[763px] flex-col">
        <NavBar />
        <div className="flex flex-1 items-start">
          <SideBar />
          <Content />
        </div>
        <div className={`absolute bottom-0 left-0 flex h-[27px] w-[770px] items-center whitespace-nowrap border-r border-t border-[#b8b8b8] bg-linear-to-b from-white to-[#dcdcdc] pl-[5px] pt-[3px] text-[14.500px] tracking-[-0.07px] text-[#333] ${UI}`}>
          file:///C:/Users/Judith/Documents/Kuliah/Semester 5/basdat/TK Tahap 2/TK 2/Melihat Daftar MKS (admin) 2.html#
        </div>
      </div>
      <Taskbar />
    </div>
  );
}
